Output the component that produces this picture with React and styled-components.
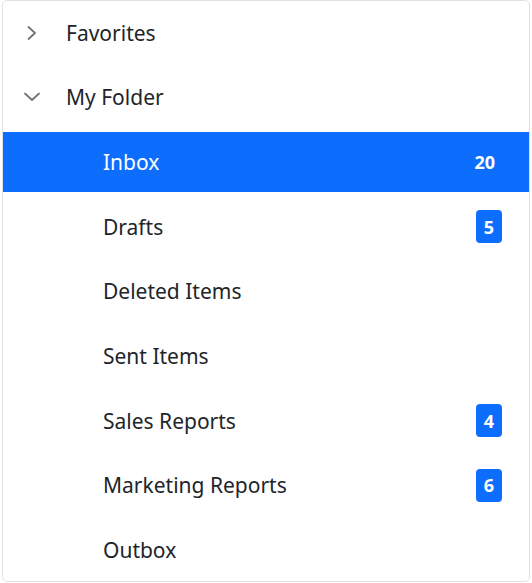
import React from "react";
import styled, { createGlobalStyle } from "styled-components";

const Global = createGlobalStyle`
  html, body { margin: 0; padding: 0; background: #fff; }
  body { font-family: "Noto Sans", "Open Sans", sans-serif; }
`;

const Panel = styled.div`
  box-sizing: border-box;
  margin: 0 2px;
  width: 528px;
  height: 582px;
  border: 1px solid #dee2e6;
  border-radius: 5px;
  padding: 1.75px 0 1px;
  display: flex;
  flex-direction: column;
  gap: 4.625px;
  overflow: hidden;
`;

const Row = styled.div`
  box-sizing: border-box;
  height: 60px;
  flex: 0 0 60px;
  display: flex;
  align-items: center;
  padding-left: ${(p) => (p.$child ? "100px" : "19px")};
  padding-right: 27px;
  background: ${(p) => (p.$active ? "#0d6efd" : "transparent")};
  color: ${(p) => (p.$active ? "#fff" : "#212529")};
  font-size: 21px;
`;

const Toggle = styled.span`
  width: 20px;
  height: 20px;
  margin-right: 24px;
  display: flex;
  align-items: center;
  justify-content: center;
  color: #6c757d;
`;

const Label = styled.span`
  flex: 1;
  white-space: nowrap;
`;

const Badge = styled.span`
  box-sizing: border-box;
  min-width: 26px;
  height: 33px;
  padding: 0 7px;
  display: flex;
  align-items: center;
  justify-content: center;
  border-radius: 4px;
  background: #0d6efd;
  color: #fff;
  font-weight: 700;
  font-size: 18px;
`;

const Chevron = ({ open }) => (
  <svg width="20" height="20" viewBox="0 0 20 20" fill="none" stroke="currentColor" strokeWidth="1.8" strokeLinecap="round" strokeLinejoin="round">
    {open ? <path d="M3 6.5 L10 13 L17 6.5" /> : <path d="M6.5 4 L13 10 L6.5 16" />}
  </svg>
);

const items = [
  { label: "Inbox", badge: 20, active: true },
  { label: "Drafts", badge: 5 },
  { label: "Deleted Items" },
  { label: "Sent Items" },
  { label: "Sales Reports", badge: 4 },
  { label: "Marketing Reports", badge: 6 },
  { label: "Outbox" },
];

export default function App() {
  return (
    <>
      <Global />
      <Panel>
        <Row>
          <Toggle><Chevron /></Toggle>
          <Label>Favorites</Label>
        </Row>
        <Row>
          <Toggle><Chevron open /></Toggle>
          <Label>My Folder</Label>
        </Row>
        {items.map((it) => (
          <Row key={it.label} $child $active={it.active}>
            <Label>{it.label}</Label>
            {it.badge != null && <Badge>{it.badge}</Badge>}
          </Row>
        ))}
      </Panel>
    </>
  );
}
